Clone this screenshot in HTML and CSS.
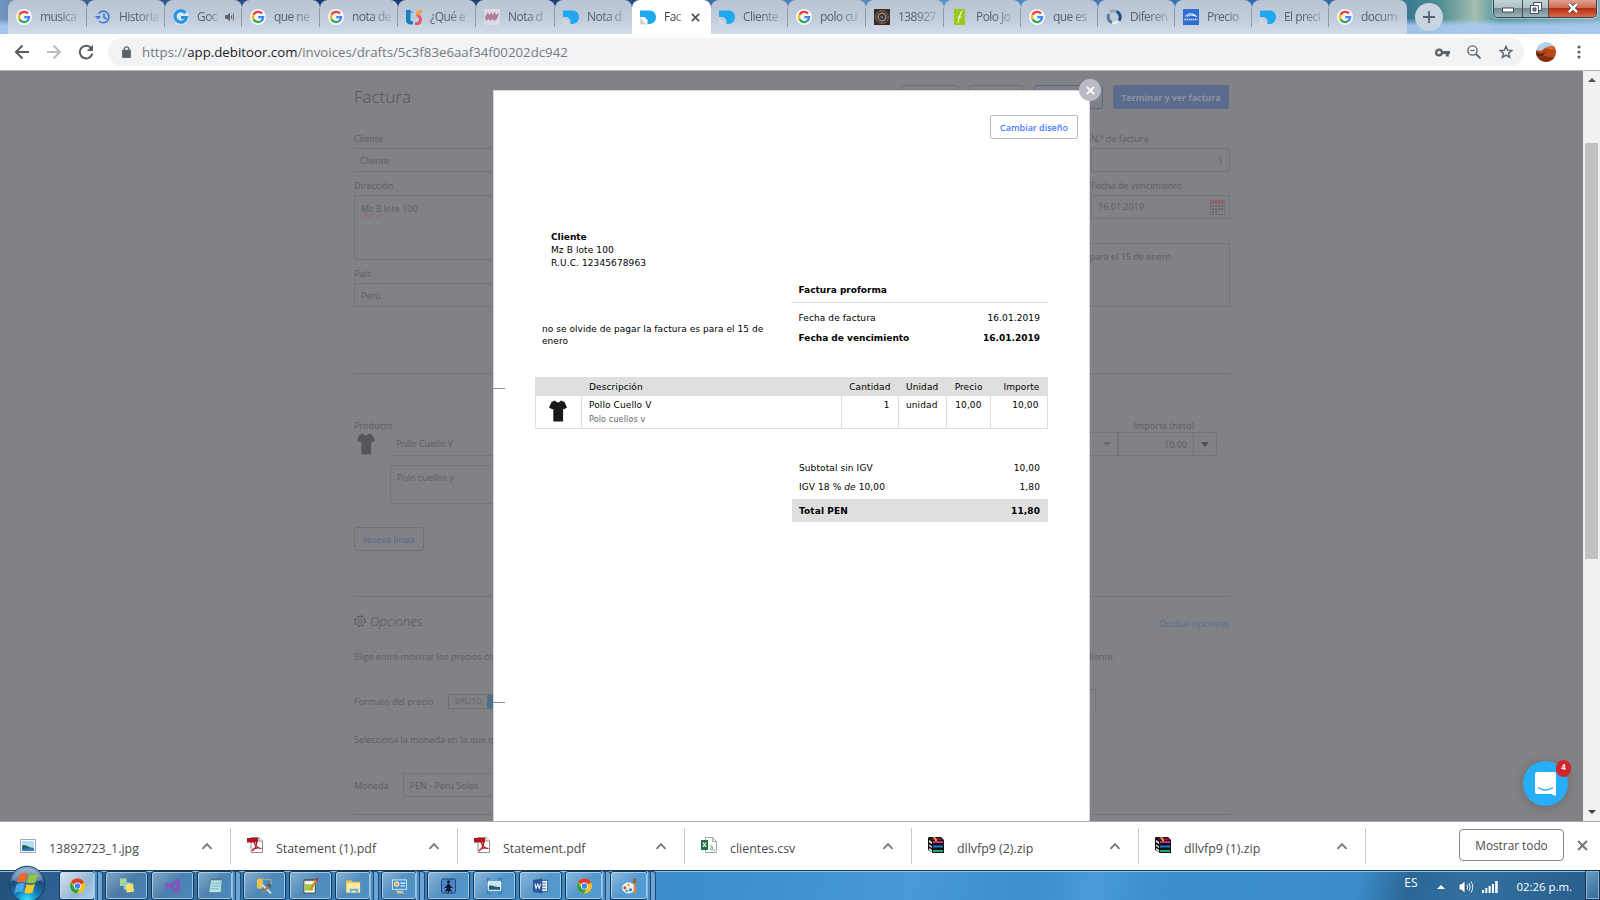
FILE: index.html
```html
<!DOCTYPE html>
<html lang="es">
<head>
<meta charset="utf-8">
<title>Factura</title>
<link rel="stylesheet" href="styles.css">
</head>
<body>
<svg class="defs" width="0" height="0">
  <symbol id="google" viewBox="0 0 16 16"><circle cx="8" cy="8" r="8" fill="#f4f6f9"/><g fill="none" stroke-width="2.3"><path d="M12 4.6A5.1 5.1 0 0 0 3.5 5.7" stroke="#e94235"/><path d="M3.5 5.7a5.1 5.1 0 0 0 0 4.6" stroke="#fabb05"/><path d="M3.5 10.300a5.1 5.1 0 0 0 7.800 1.600" stroke="#34a853"/><path d="M11.300 11.900A5.100 5.100 0 0 0 13.100 8.200H8.200" stroke="#4285f4"/></g></symbol>
  <symbol id="debi" viewBox="0 0 16 16"><path d="M0 1.500h9c4.500 0 7 2.700 7 6.500s-2.500 7-7 7H7.500V11L4.500 8H0z" fill="#1fa8f0"/><path d="M0 8.500L7 15.500H0z" fill="#d5d6d8"/></symbol>
  <symbol id="shirt" viewBox="0 0 18 22"><path d="M6 .5L2.500 2 0 7.500l3.500 2 .8-1V21.500h9.800V8.500l.6 1 3.300-2L15.500 2 12 .5Q9 4.500 6 .5z" fill="currentColor"/></symbol>
  <symbol id="chev" viewBox="0 0 12 8"><path d="M1.500 6.800L6 2.200l4.500 4.600" fill="none" stroke="#77797c" stroke-width="1.900"/></symbol>
  <symbol id="pdf" viewBox="0 0 16 16"><path d="M4 .5h8l3.500 3.500v11.500H4z" fill="#fff" stroke="#8d8d8d"/><path d="M0 1h11v4.500H0z" fill="#b3141c"/><path d="M5 14c4-3 5-6 4.500-9M7 5c1 4 3 6 7 6.500M5.500 12.500c3-1.500 6-2 9-1" fill="none" stroke="#b3141c" stroke-width="1.200"/><path d="M12 .5V4h3.500" fill="#fff" stroke="#8d8d8d"/></symbol>
  <symbol id="pic" viewBox="0 0 16 14"><path d="M.5.500h15v13H.5z" fill="#fff" stroke="#a3a7aa"/><path d="M2 2h12v10H2z" fill="#aee0f5"/><path d="M2 7c3-3 6 2 12 2v3H2z" fill="#23635f"/><path d="M2 10l12-1v3H2z" fill="#2f7fc1"/></symbol>
  <symbol id="rar" viewBox="0 0 16 16"><path d="M1 0h12l3 3v13H5L0 13V1z" fill="#111"/><path d="M2 1h10l3 2H5z" fill="#8e1430"/><path d="M5 4h10v2H5z" fill="#d5248b"/><path d="M5 8.500h10v2H5z" fill="#1e7ad0"/><path d="M5 13h10v2H5z" fill="#1ea97a"/><path d="M1 3l3 2v2L1 5zM1 7.500l3 2v1.500L1 9zM1 11l3 2v2l-3-2z" fill="#f2f2f2"/><path d="M5 0h2l2 3v1H7V3z" fill="#e0bd1c"/></symbol>
  <symbol id="chrome" viewBox="0 0 16 16"><circle cx="8" cy="8" r="8" fill="#fbc116"/><path d="M8 8L1.100 4A8 8 0 0 1 15 4.300z" fill="#e33b2e"/><path d="M1.100 4A8 8 0 0 0 7.500 16l3.500-6.500L4.500 9.500z" fill="#2ba24c"/><circle cx="8" cy="8" r="3.800" fill="#fff"/><circle cx="8" cy="8" r="3" fill="#4285f4"/></symbol>
  <symbol id="x" viewBox="0 0 10 10"><path d="M1 1l8 8M9 1L1 9" fill="none" stroke="currentColor" stroke-width="1.900"/></symbol>
</svg>

<div class="screen">
<header class="strip">
  <nav class="tabs">
    <div class="tab"><svg class="fav"><use href="#google"/></svg><span>musica</span></div>
    <div class="tab"><svg class="fav" viewBox="0 0 16 16"><path d="M3.500 4.500A5.800 5.800 0 1 1 4 12M9 4.500V8.500l3 1.500" fill="none" stroke="#3b78d8" stroke-width="1.600"/><path d="M0 7h6L3 10.500z" fill="#3b78d8"/></svg><span>Historia</span></div>
    <div class="tab audio"><svg class="fav" viewBox="0 0 16 16"><circle cx="8" cy="8" r="8" fill="#d5e6f5"/><path d="M12.500 4A5.800 5.800 0 1 0 13.500 8.500H8" fill="none" stroke="#2c93e0" stroke-width="3.200"/></svg><span>Goo</span><svg class="spk" viewBox="0 0 12 12"><path d="M0 4h2.500L6 1v10L2.500 8H0z" fill="#5f6368"/><path d="M7.800 4v4M10 2v8" stroke="#5f6368" stroke-width="1.200"/></svg></div>
    <div class="tab"><svg class="fav"><use href="#google"/></svg><span>que ne</span></div>
    <div class="tab"><svg class="fav"><use href="#google"/></svg><span>nota de</span></div>
    <div class="tab"><svg class="fav" viewBox="0 0 16 16"><path d="M0 1h4.500v10q0 1.500 2.500 1v3.500C2 16 0 14 0 11z" fill="#1681c0"/><path d="M4.500 1L7.500 4H4.500z" fill="#2aa7dd"/><path d="M15.500 2.500c-3 0-4 .8-4 2.500 0 2 3 2.500 3 5.500 0 2.700-2 4.500-5.500 4.500" fill="none" stroke="#e8536f" stroke-width="3"/><path d="M15.500 1v3c-3 0-3 2-2 3l-3-1C9 3 11 1 15.500 1z" fill="#f7a234"/></svg><span>¿Qué e</span></div>
    <div class="tab"><svg class="fav" viewBox="0 0 16 16"><path d="M0 0h16v16H0z" fill="#dcdbe3"/><path d="M1 8l3-5 1 3 3-3v3l3-3 1 3 3-2-2 6-3 2-1-2-3 2-1-2-3 2z" fill="#b17d99"/></svg><span>Nota d</span></div>
    <div class="tab"><svg class="fav"><use href="#debi"/></svg><span>Nota d</span></div>
    <div class="tab on"><svg class="fav"><use href="#debi"/></svg><span>Fac</span><svg class="cls"><use href="#x"/></svg></div>
    <div class="tab"><svg class="fav"><use href="#debi"/></svg><span>Cliente</span></div>
    <div class="tab"><svg class="fav"><use href="#google"/></svg><span>polo cu</span></div>
    <div class="tab"><svg class="fav" viewBox="0 0 16 16"><path d="M0 0h16v16H0z" fill="#332f30"/><circle cx="8" cy="8" r="6.300" fill="none" stroke="#b3653a"/><circle cx="8" cy="8" r="3.800" fill="none" stroke="#8f8b8b" stroke-width="1.500"/><circle cx="8" cy="8" r="1.500" fill="#777"/></svg><span>138927</span></div>
    <div class="tab"><svg class="fav" viewBox="0 0 16 16"><path d="M2 0h11v16H2z" fill="#97ca1c"/><path d="M10.500 2C8 3 7.500 7 6 14M5.500 8h4" fill="none" stroke="#f2f9df" stroke-width="1.100"/></svg><span>Polo Jo</span></div>
    <div class="tab"><svg class="fav"><use href="#google"/></svg><span>que es</span></div>
    <div class="tab"><svg class="fav" viewBox="0 0 16 16"><g fill="none" stroke-width="3"><path d="M4 3a6 6 0 0 1 6-.8" stroke="#8fa8bf"/><path d="M10.500 2.300A6 6 0 0 1 13 11.500" stroke="#1f4f7d"/><path d="M12 12.500A6 6 0 0 1 6 13.700" stroke="#e9edf2"/><path d="M6 13.700A6 6 0 0 1 3 5" stroke="#587a9b"/></g></svg><span>Diferen</span></div>
    <div class="tab"><svg class="fav" viewBox="0 0 16 16"><path d="M0 0h16v16H0z" fill="#2f6fd0"/><path d="M2 7.500c3-3 7-4 11-.5M4 7.500c3-2 6-1.500 10 0" fill="none" stroke="#fff" stroke-width="1"/><path d="M1.500 10.500h13" stroke="#dbe7f7" stroke-width="1.500" stroke-dasharray="1.500 .6"/></svg><span>Precio</span></div>
    <div class="tab"><svg class="fav"><use href="#debi"/></svg><span>El preci</span></div>
    <div class="tab last"><svg class="fav"><use href="#google"/></svg><span>docum</span></div>
  </nav>
  <div class="plus"><svg width="12" height="12" viewBox="0 0 12 12"><path d="M6 0v12M0 6h12" stroke="#55616e" stroke-width="1.800"/></svg></div>
  <div class="wctl">
    <div class="wb min"><svg width="12" height="6" viewBox="0 0 12 6"><path d="M.5 1h11v4H.5z" fill="#fff" stroke="#47505c"/></svg></div>
    <div class="wb res"><svg width="12" height="12" viewBox="0 0 12 12"><path d="M3.500.5h8v8h-8z" fill="#fff" stroke="#47505c"/><path d="M.5 3.500h8v8h-8z" fill="#fff" stroke="#47505c"/><path d="M3 6h3v3H3z" fill="#7e8b98" stroke="#47505c"/></svg></div>
    <div class="wb red"><svg width="12" height="10" viewBox="0 0 13 11"><path d="M2 1l9 9M11 1L2 10" stroke="#5b3535" stroke-width="4.400"/><path d="M2 1l9 9M11 1L2 10" stroke="#fff" stroke-width="2.800"/></svg></div>
  </div>
</header>

<div class="bar">
  <svg class="nav" viewBox="0 0 16 16"><path d="M15 8H2.500M8.500 1.500L2 8l6.500 6.500" fill="none" stroke="#5a5d61" stroke-width="2"/></svg>
  <svg class="nav" viewBox="0 0 16 16"><path d="M1 8h12.500M7.500 1.500L14 8l-6.500 6.500" fill="none" stroke="#b9bbbe" stroke-width="2"/></svg>
  <svg class="nav" viewBox="0 0 16 16"><path d="M13.300 4.500A6.300 6.300 0 1 0 14.300 9.500" fill="none" stroke="#5a5d61" stroke-width="2"/><path d="M15 .8v6.200H8.800z" fill="#5a5d61"/></svg>
  <div class="omni">
    <svg width="9" height="12" viewBox="0 0 10 13"><path d="M.5 4.500h9v8h-9z" fill="#5f6368" stroke="#5f6368"/><path d="M2.500 5V3a2.500 2.300 0 0 1 5 0v2" fill="none" stroke="#5f6368" stroke-width="1.400"/></svg>
    <span class="url">https://<b>app.debitoor.com</b>/invoices/drafts/5c3f83e6aaf34f00202dc942</span>
    <svg class="key" width="15" height="9" viewBox="0 0 15 9"><circle cx="4" cy="4.500" r="2.900" fill="none" stroke="#5f6368" stroke-width="2.300"/><path d="M7 3h8v3h-1.200v2.500h-3V6H7z" fill="#5f6368"/></svg>
    <svg width="14" height="14" viewBox="0 0 14 14"><circle cx="5.500" cy="5.500" r="4.600" fill="none" stroke="#5f6368" stroke-width="1.400"/><path d="M9 9l4.500 4.500" stroke="#5f6368" stroke-width="1.800"/><path d="M3.300 5.500h4.400" stroke="#5f6368" stroke-width="1.200"/></svg>
    <svg class="star" width="14" height="14" viewBox="0 0 14 14"><path d="M7 1.300l1.600 3.900 4.200.3-3.200 2.700 1 4.100L7 10.100l-3.600 2.200 1-4.100L1.200 5.500l4.200-.3z" fill="none" stroke="#5f6368" stroke-width="1.400"/></svg>
  </div>
  <svg class="ava" width="20" height="20" viewBox="0 0 20 20"><clipPath id="ac"><circle cx="10" cy="10" r="10"/></clipPath><g clip-path="url(#ac)"><path d="M0 0h20v20H0z" fill="#b3d2ea"/><path d="M0 8l5 1 4-3 6-2 5 1v15H0z" fill="#b8481a"/><path d="M9 6l6-2 5 1-4 3z" fill="#d5692f"/><path d="M0 10l5 2 4-2-2 4-7 1z" fill="#5a2814"/><path d="M0 16l8-2 12 2v4H0z" fill="#8b2e10"/></g></svg>
  <svg width="4" height="14" viewBox="0 0 4 14"><g fill="#5f6368"><circle cx="2" cy="2" r="1.600"/><circle cx="2" cy="7" r="1.600"/><circle cx="2" cy="12" r="1.600"/></g></svg>
</div>

<main class="page">
  <div class="form">
    <div class="head">
      <h1>Factura</h1>
      <i class="ghost w57"></i><i class="ghost w56"></i><i class="ghost blue"></i>
      <div class="primary">Terminar y ver factura</div>
    </div>
    <div class="cols">
      <div class="left">
        <label>Cliente</label>
        <div class="box open">Cliente</div>
        <label>Dirección</label>
        <div class="box area"><u>Mz</u> <u>B</u> lote 100</div>
        <label>País</label>
        <div class="box">Perú</div>
      </div>
      <div class="right">
        <label>N.º de factura</label>
        <div class="box num">1</div>
        <label>Fecha de vencimiento</label>
        <div class="box date">16.01.2019<svg width="15" height="15" viewBox="0 0 15 15"><path d="M.5.500h14v14H.5z" fill="none" stroke="#6e6f74"/><path d="M0 0h15v4H0z" fill="#8c6669"/><path d="M2 6h11M2 9h11M2 12h5" stroke="#66676c" stroke-width="2" stroke-dasharray="2 1"/></svg></div>
        <div class="box note">para el 15 de enero</div>
      </div>
    </div>
    <div class="hr"></div>
    <div class="plabels"><label>Producto</label><label>Importe (neto)</label></div>
    <div class="prow">
      <svg class="sh" width="18" height="22"><use href="#shirt"/></svg>
      <div class="pname">Pollo Cuello V</div>
      <div class="unit"><i class="tri dim"></i></div>
      <div class="amt">10,00</div>
      <div class="dd"><i class="tri"></i></div>
    </div>
    <div class="box pdesc">Polo cuellos <u>y</u></div>
    <div class="newline">Nueva línea</div>
    <div class="hr h2"></div>
    <div class="opt">
      <svg width="12" height="12" viewBox="0 0 12 12"><circle cx="6" cy="6" r="4.700" fill="none" stroke="#5c5d62"/><circle cx="6" cy="6" r="5.400" fill="none" stroke="#5c5d62" stroke-dasharray="2 2.240"/><circle cx="6" cy="6" r="2" fill="none" stroke="#5c5d62"/></svg>
      <em>Opciones</em><span class="hide">Ocultar opciones</span>
    </div>
    <div class="line elige"><span>Elige entre mostrar los precios co</span><span class="tail">liente.</span></div>
    <div class="line fmt"><span>Formato del precio</span><div class="tog"><span>BRUTO</span><i></i></div><div class="edge"></div></div>
    <div class="line sel">Selecciona la moneda en la que q</div>
    <div class="line mon"><span>Moneda</span><div class="box">PEN - Peru Soles</div></div>
    <div class="hr h3"></div>
  </div>
  <div class="scroll"><i class="tri up"></i><div class="thumb"></div><i class="tri down"></i></div>

  <section class="modal">
    <div class="close"><svg width="9" height="9"><use href="#x"/></svg></div>
    <i class="fold f1"></i><i class="fold f2"></i>
    <div class="cambiar">Cambiar diseño</div>
    <div class="addr"><b>Cliente</b><br>Mz B lote 100<br>R.U.C. 12345678963</div>
    <div class="mid">
      <p>no se olvide de pagar la factura es para el 15 de enero</p>
      <div class="info">
        <h2>Factura proforma</h2>
        <div class="kv"><span>Fecha de factura</span><span>16.01.2019</span></div>
        <div class="kv bold"><span>Fecha de vencimiento</span><span>16.01.2019</span></div>
      </div>
    </div>
    <div class="tbl">
      <div class="tr th"><span></span><span>Descripción</span><span class="r">Cantidad</span><span>Unidad</span><span class="r">Precio</span><span class="r">Importe</span></div>
      <div class="tr td"><span class="c"><svg width="18" height="22"><use href="#shirt"/></svg></span><span>Pollo Cuello V<small>Polo cuellos v</small></span><span class="r">1</span><span>unidad</span><span class="r">10,00</span><span class="r">10,00</span></div>
    </div>
    <div class="tot">
      <div class="kv"><span>Subtotal sin IGV</span><span>10,00</span></div>
      <div class="kv"><span>IGV 18 % <em>de</em> 10,00</span><span>1,80</span></div>
      <div class="kv sum"><span>Total PEN</span><span>11,80</span></div>
    </div>
  </section>
  <div class="chat"><svg width="22" height="24" viewBox="0 0 22 24"><path d="M2 0h17q2 0 2 2v22l-5-2H2q-2 0-2-2V2q0-2 2-2z" fill="#fff"/><path d="M3 15.500q7.500 5 15 0" fill="none" stroke="#27aef9" stroke-width="1.400"/></svg><span class="badge">4</span></div>
</main>

<footer class="dl">
  <div class="di"><svg class="lo" width="16" height="14"><use href="#pic"/></svg><span>13892723_1.jpg</span><svg class="ch"><use href="#chev"/></svg></div>
  <div class="di"><svg width="16" height="16"><use href="#pdf"/></svg><span>Statement (1).pdf</span><svg class="ch"><use href="#chev"/></svg></div>
  <div class="di"><svg width="16" height="16"><use href="#pdf"/></svg><span>Statement.pdf</span><svg class="ch"><use href="#chev"/></svg></div>
  <div class="di"><svg width="16" height="16" viewBox="0 0 16 16"><path d="M4.500.500h7l4 4v11h-11z" fill="#fff" stroke="#a4a6a8"/><path d="M11.500.5v4h4" fill="none" stroke="#a4a6a8"/><path d="M0 3h7v10H0z" fill="#1f7246"/><path d="M1.800 5.500l3.400 4.500M5.200 5.500L1.800 10" stroke="#fff" stroke-width="1.200"/><path d="M8.500 9c2-1 3 0 3 3.500-3 1-3-2 0-2M13.500 12l-.5 2" fill="none" stroke="#56a679"/></svg><span>clientes.csv</span><svg class="ch"><use href="#chev"/></svg></div>
  <div class="di"><svg width="16" height="16"><use href="#rar"/></svg><span>dllvfp9 (2).zip</span><svg class="ch"><use href="#chev"/></svg></div>
  <div class="di"><svg width="16" height="16"><use href="#rar"/></svg><span>dllvfp9 (1).zip</span><svg class="ch"><use href="#chev"/></svg></div>
  <div class="all">Mostrar todo</div>
  <svg class="dx" width="11" height="11"><use href="#x"/></svg>
</footer>

<div class="task">
  <svg class="orb" width="38" height="38" viewBox="0 0 38 38"><defs><radialGradient id="og" cx=".5" cy=".95" r=".9"><stop offset="0" stop-color="#2fe6ff"/><stop offset=".35" stop-color="#1481bb"/><stop offset=".7" stop-color="#1d4a7c"/><stop offset="1" stop-color="#7fa3c4"/></radialGradient></defs><circle cx="19" cy="19" r="17.800" fill="url(#og)" stroke="#17406a"/><path d="M4 15a15.500 15.500 0 0 1 30 0q-15 6-30 0z" fill="#fff" opacity=".3"/><path d="M11 10q4-3 8.500-1.500L17.500 17q-4-1.500-8.500 1z" fill="#ee6a2c"/><path d="M21 9q4 2 9 0l-2.500 8.500q-4 2-8.500 0z" fill="#8fc73e"/><path d="M8.500 19.500q4-2.500 8.500-1l-2.200 8.500q-4-1.500-8.300 1z" fill="#4aa7e8"/><path d="M18.500 19q4 2 8.500 0l-2.500 8.500q-4 2-8.200 0z" fill="#fcc62d"/></svg>
  <div class="tb stack hot w36"><svg><use href="#chrome"/></svg></div>
  <div class="tb"><svg viewBox="0 0 16 16"><path d="M1 0h7v8H1z" fill="#a9d98c"/><path d="M5 4h7v8H5z" fill="#8fc5e8"/><path d="M7 6l8-1 1 9-8 1z" fill="#f7dd6a"/></svg></div>
  <div class="tb"><svg viewBox="0 0 16 16"><path d="M12 0l4 1.500v13L12 16 5 9.500 1.500 12 0 11V5l1.500-1L5 6.500zM12 4.500L7.500 8l4.500 3.500zM1.500 6v4l2-2z" fill="#8454bd" fill-rule="evenodd"/></svg></div>
  <div class="tb stack w36"><svg viewBox="0 0 16 16"><path d="M3 1h12l-1 14H1z" fill="#b9e3ec" stroke="#5a8c9b"/><path d="M3 1h12" stroke="#4a5b63" stroke-width="2" stroke-dasharray="1 1"/><path d="M4 5h9M4 8h9M3 11h9" stroke="#6fb1c2"/></svg></div>
  <div class="tb"><svg viewBox="0 0 16 16"><path d="M0 1q3-2 6 0v9q-3 2-6 0z" fill="#e7c544"/><path d="M6 1h9v9" fill="none" stroke="#d3c862" stroke-dasharray="2 1"/><path d="M5 6l10 10" stroke="#d8dce0" stroke-width="2"/><path d="M14 7l-8 8" stroke="#b57740" stroke-width="2"/><path d="M11 6l4 3" stroke="#5b6066" stroke-width="3"/></svg></div>
  <div class="tb"><svg viewBox="0 0 16 16"><path d="M1 1.500h12v14H1z" fill="#fff" stroke="#444"/><path d="M2 6h9v7H2z" fill="#a3cf45"/><path d="M2 2h10" stroke="#333" stroke-width="2" stroke-dasharray="1 1"/><path d="M14.500 1L8 12" stroke="#d98b18" stroke-width="2.500"/><path d="M15.500 0l-1.500 2.500" stroke="#c22" stroke-width="3"/></svg></div>
  <div class="tb stack w36"><svg viewBox="0 0 16 16"><path d="M0 2h6l1 1.500h8V15H0z" fill="#e9c55d"/><path d="M1 5h14v10H1z" fill="#fbe9a5"/><path d="M4 11h9v4h-2v-2H6v2H4z" fill="#60b0dc"/></svg></div>
  <div class="tb stack w36"><svg viewBox="0 0 16 16"><path d="M0 1h16v11H0z" fill="#dfeaf2"/><path d="M1 2h14v9H1z" fill="#3c8fd4"/><circle cx="5" cy="6" r="2.500" fill="#f6a623" stroke="#fff"/><path d="M9 5h5M9 8h5" stroke="#fff" stroke-width="1.300"/><path d="M4 13h7l2 3H6z" fill="#d6c692"/></svg></div>
  <div class="tb"><svg viewBox="0 0 16 16"><rect x=".5" y=".5" width="15" height="15" rx="2" fill="#4c86c8" stroke="#1d3f6e"/><circle cx="8" cy="3.500" r="1.600" fill="#0d1a2b"/><path d="M8 5l4.500 5H9.500l.5 1 2 3-3-1-.5 2h-1L7 13l-3 1 2-3 .5-1H3.500z" fill="#0d1a2b"/></svg></div>
  <div class="tb"><svg viewBox="0 0 16 16"><path d="M0 4V0h4M12 0h4v4M16 12v4h-4M4 16H0v-4" fill="none" stroke="#2d7cc4" stroke-width="2"/><path d="M1.500 3.500h13v9h-13z" fill="#bfe4f5" stroke="#fff"/><path d="M2 8c4-2 6 2 12 1v3H2z" fill="#235e6e"/></svg></div>
  <div class="tb"><svg viewBox="0 0 16 16"><path d="M8 2h7.500v12H8z" fill="#fff" stroke="#2b579a"/><path d="M10 5h4M10 8h4M10 11h4" stroke="#2b579a"/><path d="M0 1.500L10 0v16L0 14.500z" fill="#2b579a"/><path d="M2 5.500l1.300 5L5 6l1.700 4.500L8 5.500" fill="none" stroke="#fff" stroke-width="1.100"/></svg></div>
  <div class="tb stack tight w38"><svg><use href="#chrome"/></svg></div>
  <div class="tb stack w38"><svg viewBox="0 0 16 16"><ellipse cx="7" cy="10" rx="7" ry="6" fill="#e8eef4"/><circle cx="3" cy="10" r="1.500" fill="#d43b34"/><circle cx="5" cy="13" r="1.300" fill="#3fa64a"/><circle cx="7" cy="7" r="1.400" fill="#f1a82a"/><circle cx="9" cy="12" r="1.700" fill="#3a7bd0"/><path d="M13.500 5v11" stroke="#e88a2a" stroke-width="2.200"/><path d="M13.500 0v5" stroke="#a2603a" stroke-width="3.500"/></svg></div>
  <div class="tray">
    <span class="lang">ES</span><i class="tri up white"></i>
    <svg width="16" height="14" viewBox="0 0 16 14"><path d="M1 4h2.500L7 .5v13L3.500 10H1z" fill="#fff" stroke="#1d3854" stroke-width=".7"/><path d="M9 4.500q1.500 2.500 0 5M11 3q2.500 4 0 8M13 1.500q3.500 5.500 0 11" fill="none" stroke="#e4eef7"/></svg>
    <svg width="16" height="12" viewBox="0 0 16 12"><path d="M0 9h2v3H0zM3.300 7h2v5h-2zM6.600 5h2v7h-2zM9.900 3h2v9h-2zM13.200 0h2.500v12h-2.500z" fill="#fff"/></svg>
    <span class="clk">02:26 p.m.</span><i class="desk"></i>
  </div>
</div>
</div>
</body>
</html>
```

FILE: styles.css
```css
* { box-sizing: border-box; }
body { margin: 0; font-family: "Open Sans", sans-serif; }
.defs { position: absolute; }
svg { display: block; flex: none; }
.screen { width: 1600px; height: 900px; overflow: hidden; display: flex; flex-direction: column; }

/* Tab strip */
.strip { height: 34px; flex: none; display: flex; align-items: flex-start; padding-left: 8px;
  background: linear-gradient(180deg, transparent 55%, rgba(170,203,243,.9) 75%), linear-gradient(90deg, #6f96bd 0, #3b5f92 80px, #1c3c74 350px, #1e427c 600px, #4a82b8 760px, #5b93c6 950px, #3f7ab8 1100px, #2c64a8 1300px, #3c7a92 1410px, #4f8d92 1440px, #a3bfb0 1475px, #4d929c 1500px, #86aebb 1600px); }
.tabs { display: grid; grid-template-columns: 79px 78px 77px 78px 78px 78px 79px 77px 79px 77px 78px 78px 77px 77px 77px 77px 77px 78px; height: 34px; }
.tab { display: flex; align-items: center; padding-left: 8px; background: linear-gradient(#b9c5d5, #bfcada 50%, #d2dce9); border-radius: 8px 8px 0 0; position: relative; height: 34px; }
.tab::after { content: ""; position: absolute; right: 0; top: 8px; width: 1px; height: 19px; background: #8e99a8; }
.tab.on::after, .tab.last::after, .tab:has(+ .on)::after { display: none; }
.tab.on { background: #fff; }
.fav { width: 16px; height: 16px; }
.tab span { margin-left: 8px; white-space: nowrap; font: 12px/20px "Open Sans", sans-serif; letter-spacing: -.55px; color: #5a626e; -webkit-mask-image: linear-gradient(90deg, #000 18px, rgba(0,0,0,.2) 39px); }
.tab.audio span, .tab.on span { width: 20px; -webkit-mask-image: linear-gradient(90deg, #000 10px, rgba(0,0,0,.25) 22px); }
.spk { width: 10px; height: 10px; margin-left: 8px; }
.tab.on span { color: #3b3e42; width: 18px; }
.cls { width: 9px; height: 9px; margin-left: 9px; color: #505357; }
.plus { width: 28px; height: 28px; margin: 3px 0 0 8px; border-radius: 50%; background: #c8d5e0; display: flex; align-items: center; justify-content: center; }
.wctl { display: flex; margin-left: auto; margin-right: 3px; height: 18px; border: 1px solid #39444f; border-top: 0; border-radius: 0 0 5px 5px; overflow: hidden; width: 104px; box-shadow: 0 0 0 1px rgba(255,255,255,.4); }
.wb { display: flex; align-items: center; justify-content: center; background: linear-gradient(#c4d3d6, #aebfc4 45%, #718a93 50%, #9cb3b8); border-right: 1px solid #44505b; }
.min { width: 29px; padding-top: 3px; } .res { width: 26px; padding-bottom: 2px; }
.red { flex: 1; border: 0; padding-bottom: 2px; background: linear-gradient(#e0a291, #cf6c54 45%, #b52d13 50%, #d6694a); }

/* Toolbar */
.bar { height: 37px; flex: none; display: flex; align-items: center; background: #fff; padding-left: 14px; border-bottom: 1px solid #b3b3b3; }
.nav { width: 16px; height: 16px; margin-right: 16px; }
.omni { margin-left: -2px; width: 1416px; height: 28px; border-radius: 14px; background: #f1f3f4; display: flex; align-items: center; padding-left: 14px; }
.url { margin-left: 11px; font-size: 13.250px; line-height: 20px; color: #75797e; white-space: nowrap; }
.url b { font-weight: 400; color: #202124; }
.key { margin-left: auto; margin-right: 17px; }
.star { margin: 0 11px 0 18px; }
.ava { margin: 0 21px 0 12px; }

/* Dimmed invoice editor */
.page { height: 750px; flex: none; display: flex; position: relative; overflow: hidden; background: #818285; color: #5d5e63; font-size: 9px; line-height: 13px; }
.form { margin-left: 354px; width: 876px; }
.head { display: flex; justify-content: flex-end; padding: 14px 1px 0 0; height: 62px; }
h1 { margin: 1px auto 0 0; font: 300 17px/22px "Open Sans", sans-serif; color: #54555a; }
.ghost { height: 24px; border: 1px solid #707175; border-radius: 3px; }
.w57 { width: 57px; margin-right: 9px; } .w56 { width: 56px; margin-right: 10px; }
.ghost.blue { width: 69px; margin-right: 10px; border-color: #56678c; }
.primary { width: 116px; height: 24px; border-radius: 3px; background: #5a6b8e; color: #8d939f; font-weight: 700; letter-spacing: -.1px; line-height: 25px; text-align: center; }
.cols { display: grid; grid-template-columns: 1fr 139px; height: 240px; }
label { display: block; height: 15px; line-height: 11px; }
.box { height: 24px; border: 1px solid #747579; padding: 0 6px; line-height: 24px; margin-bottom: 8px; white-space: nowrap; }
.left .box { width: 300px; }
.left .open { border-left: 0; padding-left: 6px; }
.left .area { height: 65px; line-height: 13px; padding-top: 6px; margin-bottom: 8px; }
.box u { text-decoration: underline wavy #9b5c62 1px; text-underline-offset: 1px; }
.num { text-align: right; }
.date { display: flex; align-items: center; justify-content: space-between; padding-right: 4px; }
.right .note { width: 436px; height: 64px; margin: 24px 0 0 -297px; text-align: right; padding: 6px 58px 0 0; line-height: 13px; }
.hr { height: 1px; background: #737478; }
.plabels { display: flex; justify-content: space-between; padding: 46px 36px 0 0; height: 58px; }
.prow { display: flex; height: 24px; margin-left: 3px; }
.sh { color: #55565a; margin-top: 1px; }
.pname { margin-left: 15px; width: 300px; border-bottom: 1px solid #737478; padding-left: 6px; line-height: 24px; }
.unit, .amt, .dd { border: 1px solid #737478; line-height: 23px; }
.unit { margin-left: auto; width: 60px; display: flex; align-items: center; justify-content: flex-end; padding-right: 6px; }
.amt { width: 75px; text-align: right; padding-right: 6px; border-right: 0; }
.dd { width: 24px; margin-right: 13px; display: flex; align-items: center; justify-content: center; border-radius: 0 2px 2px 0; }
.tri { border: 4px solid transparent; border-top: 5px solid #505156; border-bottom: 0; }
.tri.dim { border-top-width: 4px; border-top-color: #66676b; }
.tri.up { border-top: 0; border-bottom: 4px solid #505050; }
.tri.down { border-top: 4px solid #404040; }
.pdesc { margin: 9px 0 0 36px; width: 300px; height: 39px; line-height: 13px; padding-top: 5px; }
.newline { width: 70px; height: 24px; margin-top: 23px; border: 1px solid #707175; border-radius: 3px; text-align: center; line-height: 24px; font-weight: 600; color: #606b8c; }
.h2 { margin-top: 45px; }
.opt { display: flex; align-items: center; height: 50px; padding-bottom: 2px; }
.opt em { font: italic 300 13px/20px "Open Sans", sans-serif; margin-left: 4px; color: #515257; }
.hide { margin-left: auto; color: #596a8f; margin-top: 4px; }
.line { display: flex; white-space: nowrap; align-items: center; }
.elige { height: 20px; margin-top: -1px; } .tail { margin-left: auto; margin-right: 115px; }
.fmt { height: 70px; }
.tog { margin-left: 15px; display: flex; border: 1px solid #707175; height: 15px; width: 60px; }
.tog span { width: 38px; text-align: center; font-size: 8px; line-height: 12px; font-weight: 600; color: #6c6d71; }
.tog i { flex: 1; background: #4f7088; }
.edge { width: 100px; height: 24px; border: 1px solid #747579; border-bottom: 0; margin-left: auto; margin-right: 134px; }
.sel { height: 6px; }
.mon { height: 86px; } .mon .box { margin: 0 0 0 14px; width: 200px; }
.h3 { margin-top: -14px; }
.scroll { margin-left: auto; width: 17px; background: #f1f1f1; display: flex; flex-direction: column; align-items: center; padding: 7px 0; }
.thumb { width: 13px; height: 416px; margin-top: 61px; background: #c1c1c1; }
.scroll .down { margin-top: auto; }

/* Invoice preview */
.modal { position: absolute; left: 493px; top: 19px; width: 597px; height: 740px; background: #fff; border: 1px solid #d6d7dc; color: #000; font: 9px/13px "DejaVu Sans", sans-serif; letter-spacing: .1px; padding: 24px 0 0 0; }
.close { position: absolute; left: 585px; top: -12px; width: 22px; height: 22px; border-radius: 50%; background: #babbc4; color: #fff; display: flex; align-items: center; justify-content: center; }
.fold { position: absolute; left: -1px; width: 12px; height: 1px; background: #939397; }
.f1 { top: 297px; } .f2 { top: 611px; }
.cambiar { margin-left: 496px; width: 88px; height: 24px; border: 1px solid #b9bac6; border-radius: 2px; text-align: center; font: 600 9px/23px "Open Sans", sans-serif; letter-spacing: 0; color: #4a7dff; }
.addr { margin: 92px 0 0 57px; }
.addr b { letter-spacing: 0; }
.mid { display: flex; justify-content: space-between; padding: 14px 41px 0 48px; height: 107px; }
.mid p { margin: 39px 0 0; width: 230px; line-height: 12px; letter-spacing: .05px; }
.info { width: 257px; }
h2 { margin: 0; padding: 0 7.500px; height: 19px; border-bottom: 1px solid #dedede; font: bold 9px/13px "DejaVu Sans", sans-serif; letter-spacing: 0; }
.info .kv { height: 20px; } .info h2 + .kv { margin-top: 5px; }
.kv { display: flex; justify-content: space-between; align-items: center; padding: 0 8px 0 7px; }
.info .kv { padding-left: 7.500px; }
.bold { font-weight: bold; letter-spacing: 0; }
.tbl { margin-left: 41px; width: 513px; }
.tr { display: grid; grid-template-columns: 47px 260px 57px 48px 44px 57px; }
.th { height: 19px; background: #dfdfdf; line-height: 20px; }
.tr span { padding: 0 8px 0 7px; }
.tr .r { padding: 0 8.500px 0 0; }
.td { height: 33px; border: 1px solid #dfdfdf; border-top: 0; grid-template-columns: 46px 260px 57px 48px 44px 56px; }
.td > span, .td > .r { padding-top: 3px; border-right: 1px solid #dfdfdf; }
.td > span:last-child { border: 0; }
.td > span.c { padding: 4px 0 0 13px; color: #191919; }
.r { text-align: right; }
small { display: block; font-size: 8px; line-height: 16px; letter-spacing: .15px; color: #5f6570; }
.tot { width: 256px; margin: 30px 0 0 298px; }
.tot .kv { height: 19px; }
.tot .kv.sum { height: 23px; margin-top: 2px; padding-top: 1px; background: #dfdfdf; font-weight: bold; }
.chat { position: absolute; left: 1523px; top: 690px; width: 45px; height: 45px; border-radius: 50%; background: #27aef9; box-shadow: 0 1px 10px rgba(0,0,0,.2); padding: 11px 0 0 12px; }
.badge { position: absolute; left: 33px; top: -1px; width: 15px; height: 17px; border-radius: 8px; background: #d3242a; color: #fff; font: bold 8px/14px "Open Sans", sans-serif; text-align: center; }

/* Download shelf */
.dl { height: 49px; flex: none; display: flex; background: #fff; border-top: 1px solid #a9a9a9; color: #4a4a4c; font-size: 12.400px; }
.di { width: 227px; height: 36px; margin-top: 6px; border-right: 1px solid #c9c9c9; display: flex; align-items: flex-start; padding: 9px 17px 0 16px; }
.di:first-child { width: 231px; padding: 9px 17px 0 20px; }
.lo { margin-top: 2px; }
.di span { margin: 3px auto 0 13px; line-height: 18px; }
.ch { width: 12px; height: 8px; margin-top: 5px; }
.all { margin: 7px 0 0 93px; width: 105px; height: 32px; border: 1px solid #85878a; border-radius: 4px; text-align: center; font-size: 11.800px; line-height: 30px; }
.dx { margin: 18px 0 0 13px; color: #77797c; }

/* Taskbar */
.task { height: 30px; flex: none; display: flex; position: relative; border-top: 1px solid #1c3b5b; box-shadow: inset 0 1px #8fc0e6; background: linear-gradient(100deg, #24507a 0, #2c6090 50px, #3577ac 250px, #3f87c0 500px, #3b8fcf 700px, #4899d6 900px, #3b8fcf 1020px, #4a9bd8 1080px, #3b8fcf 1140px, #3b8bc9 1340px, #2b6796 1390px, #33709f 1450px, #265a86 1600px); }
.orb { margin: -6px 13px 0 8px; }
.tb { width: 43px; height: 29px; margin-right: 3px; border: 1px solid #16385b; border-radius: 3px; box-shadow: inset 0 0 0 1px rgba(190,222,246,.7); background: linear-gradient(135deg, rgba(255,255,255,.42), rgba(255,255,255,.12) 50%, rgba(120,190,240,.3)); display: flex; align-items: center; justify-content: center; position: relative; }
.tb svg { width: 15px; height: 16px; }
.w36 { width: 36px; } .w38 { width: 38px; }
.tb.hot { background: linear-gradient(135deg, #dbe7f2, #95b6d3 60%, #a9d0ee); }
.tb.stack { margin-right: 10px; }
.tb.tight { margin-right: 7px; }
.stack::after { content: ""; position: absolute; left: 100%; top: -1px; width: 7px; height: 29px; border: 1px solid #1f4a74; border-left: 1px solid #8dbbe0; border-radius: 0 3px 3px 0; background: linear-gradient(90deg, #4b8bc0 0 2px, #1f4a74 2px 3px, #6aa5d4 3px); }
.tray { margin-left: auto; display: flex; align-items: center; color: #fff; padding-top: 2px; }
.lang { font: 12px/14px "Open Sans", sans-serif; margin: -8px 20px 0 0; }
.tri.white { border-bottom-color: #fff; margin-right: 13px; margin-top: 0; }
.tray svg + svg { margin-left: 8px; }
.clk { font: 11.400px/16px "Open Sans", sans-serif; margin: 0 13px 0 18px; white-space: nowrap; }
.desk { width: 15px; height: 30px; margin-top: -3px; border: 1px solid #17314b; box-shadow: inset 0 0 0 1px #86b2d6; background: linear-gradient(135deg, #6f9cc2, #2d689b); }
```
